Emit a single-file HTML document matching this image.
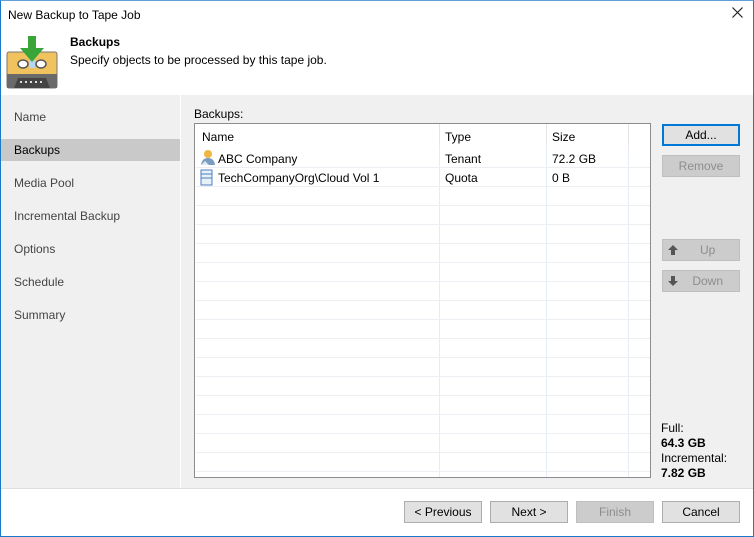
<!DOCTYPE html>
<html><head><style>
*{margin:0;padding:0;box-sizing:border-box}
body{width:754px;height:537px;overflow:hidden;font-family:"Liberation Sans",sans-serif;font-size:12px;color:#000;background:#fff;position:relative}
.abs{position:absolute}
.nav div{position:absolute;left:1px;width:179px;height:22px;line-height:22px;padding-left:13px;color:#444}
.btn{position:absolute;height:22px;border:1px solid #adadad;background:#e1e1e1;text-align:center;line-height:20px;color:#000}
.dis{background:#cccccc;border-color:#bfbfbf;color:#8d8d8d}
.hl{position:absolute;left:1px;width:454px;height:1px;background:#ebeef3}
.vl{position:absolute;top:0;width:1px;height:352px;background:#e5ecf5}
</style></head><body>
<div class="abs" style="left:8px;top:8px;font-size:12px">New Backup to Tape Job</div>
<svg class="abs" style="left:732px;top:7px" width="11" height="11"><path d="M0.5 0.5 L10.5 10.5 M10.5 0.5 L0.5 10.5" stroke="#222" stroke-width="1.2"/></svg>
<svg class="abs" style="left:6px;top:34px" width="54" height="56" viewBox="0 0 54 56">
<rect x="1" y="18" width="50" height="36" rx="2" fill="#f0c35f" stroke="#777" />
<rect x="1" y="40" width="50" height="14" fill="#6a6a6a"/>
<path d="M8 54 L12 44 H40 L44 54Z" fill="#444"/>
<g fill="#ddd"><rect x="14" y="47" width="2" height="2"/><rect x="19" y="47" width="2" height="2"/><rect x="24" y="47" width="2" height="2"/><rect x="29" y="47" width="2" height="2"/><rect x="34" y="47" width="2" height="2"/></g>
<ellipse cx="17" cy="30" rx="5" ry="4" fill="#fff" stroke="#555" stroke-width="1.5"/>
<ellipse cx="35" cy="30" rx="5" ry="4" fill="#fff" stroke="#555" stroke-width="1.5"/>
<rect x="23" y="26" width="6" height="8" fill="#b8d6ef"/>
<path d="M22 2 H30 V14 H38 L26 28 L14 14 H22Z" fill="#3aa63a"/>
</svg>
<div class="abs" style="left:70px;top:35px;font-weight:bold">Backups</div>
<div class="abs" style="left:70px;top:53px">Specify objects to be processed by this tape job.</div>
<div class="abs" style="left:1px;top:95px;width:179px;height:393px;background:#f0f0f0"></div>
<div class="abs" style="left:181px;top:95px;width:572px;height:393px;background:#f0f0f0"></div>
<div class="nav">
<div style="top:106px">Name</div>
<div style="top:139px;background:#c9c9c9;color:#000">Backups</div>
<div style="top:172px">Media Pool</div>
<div style="top:205px">Incremental Backup</div>
<div style="top:238px">Options</div>
<div style="top:271px">Schedule</div>
<div style="top:304px">Summary</div>
</div>
<div class="abs" style="left:194px;top:107px">Backups:</div>
<div class="abs" style="left:194px;top:123px;width:457px;height:355px;border:1px solid #8c8c8c;background:#fff;overflow:hidden">
<div class="vl" style="left:244px;background:#e5e5e5;height:22px"></div>
<div class="vl" style="left:351px;background:#e5e5e5;height:22px"></div>
<div class="vl" style="left:433px;background:#e5e5e5;height:22px"></div>
<div class="vl" style="left:244px;top:22px"></div>
<div class="vl" style="left:351px;top:22px"></div>
<div class="vl" style="left:433px;top:22px"></div>
<div class="abs" style="left:7px;top:6px">Name</div>
<div class="abs" style="left:250px;top:6px">Type</div>
<div class="abs" style="left:357px;top:6px">Size</div>
<svg class="abs" style="left:5px;top:25px" width="16" height="17"><circle cx="8" cy="5" r="4" fill="#f0b642"/><path d="M1 16 Q2 9 8 9 Q14 9 15 16Z" fill="#7a9cc0"/><path d="M1 16 L5 12 L9 16Z" fill="#dde8f3"/></svg>
<div class="abs" style="left:23px;top:28px">ABC Company</div>
<div class="abs" style="left:250px;top:28px">Tenant</div>
<div class="abs" style="left:357px;top:28px">72.2 GB</div>
<svg class="abs" style="left:5px;top:45px" width="14" height="17"><rect x="1" y="1" width="11" height="15" fill="#e8f0f8" stroke="#4a7fbf"/><line x1="1" y1="5" x2="12" y2="5" stroke="#4a7fbf"/><line x1="1" y1="9" x2="12" y2="9" stroke="#4a7fbf"/></svg>
<div class="abs" style="left:23px;top:47px">TechCompanyOrg\Cloud Vol 1</div>
<div class="abs" style="left:250px;top:47px">Quota</div>
<div class="abs" style="left:357px;top:47px">0 B</div>
<div class="hl" style="top:43px"></div><div class="hl" style="top:62px"></div><div class="hl" style="top:81px"></div><div class="hl" style="top:100px"></div><div class="hl" style="top:119px"></div><div class="hl" style="top:138px"></div><div class="hl" style="top:157px"></div><div class="hl" style="top:176px"></div><div class="hl" style="top:195px"></div><div class="hl" style="top:214px"></div><div class="hl" style="top:233px"></div><div class="hl" style="top:252px"></div><div class="hl" style="top:271px"></div><div class="hl" style="top:290px"></div><div class="hl" style="top:309px"></div><div class="hl" style="top:328px"></div><div class="hl" style="top:347px"></div>
</div>
<div class="btn" style="left:662px;top:124px;width:78px;border:2px solid #0078d7;line-height:18px">Add...</div>
<div class="btn dis" style="left:662px;top:155px;width:78px">Remove</div>
<div class="btn dis" style="left:662px;top:239px;width:78px">&nbsp;&nbsp;&nbsp;&nbsp;Up<svg class="abs" style="left:5px;top:5px" width="10" height="10"><path d="M5 0 L10 5 H7 V10 H3 V5 H0Z" fill="#555"/></svg></div>
<div class="btn dis" style="left:662px;top:270px;width:78px">&nbsp;&nbsp;&nbsp;&nbsp;Down<svg class="abs" style="left:5px;top:5px" width="10" height="10"><path d="M5 10 L10 5 H7 V0 H3 V5 H0Z" fill="#555"/></svg></div>
<div class="abs" style="left:661px;top:421px;line-height:15px">Full:<br><b>64.3 GB</b><br>Incremental:<br><b>7.82 GB</b></div>
<div class="abs" style="left:1px;top:488px;width:752px;height:1px;background:#dfdfdf"></div>
<div class="btn" style="left:404px;top:501px;width:78px">&lt; Previous</div>
<div class="btn" style="left:490px;top:501px;width:78px">Next &gt;</div>
<div class="btn dis" style="left:576px;top:501px;width:78px">Finish</div>
<div class="btn" style="left:662px;top:501px;width:78px">Cancel</div>
<div class="abs" style="left:0;top:0;width:754px;height:537px;border:1px solid #1979ca;border-top-color:#5fa0d8;pointer-events:none"></div>
</body></html>
